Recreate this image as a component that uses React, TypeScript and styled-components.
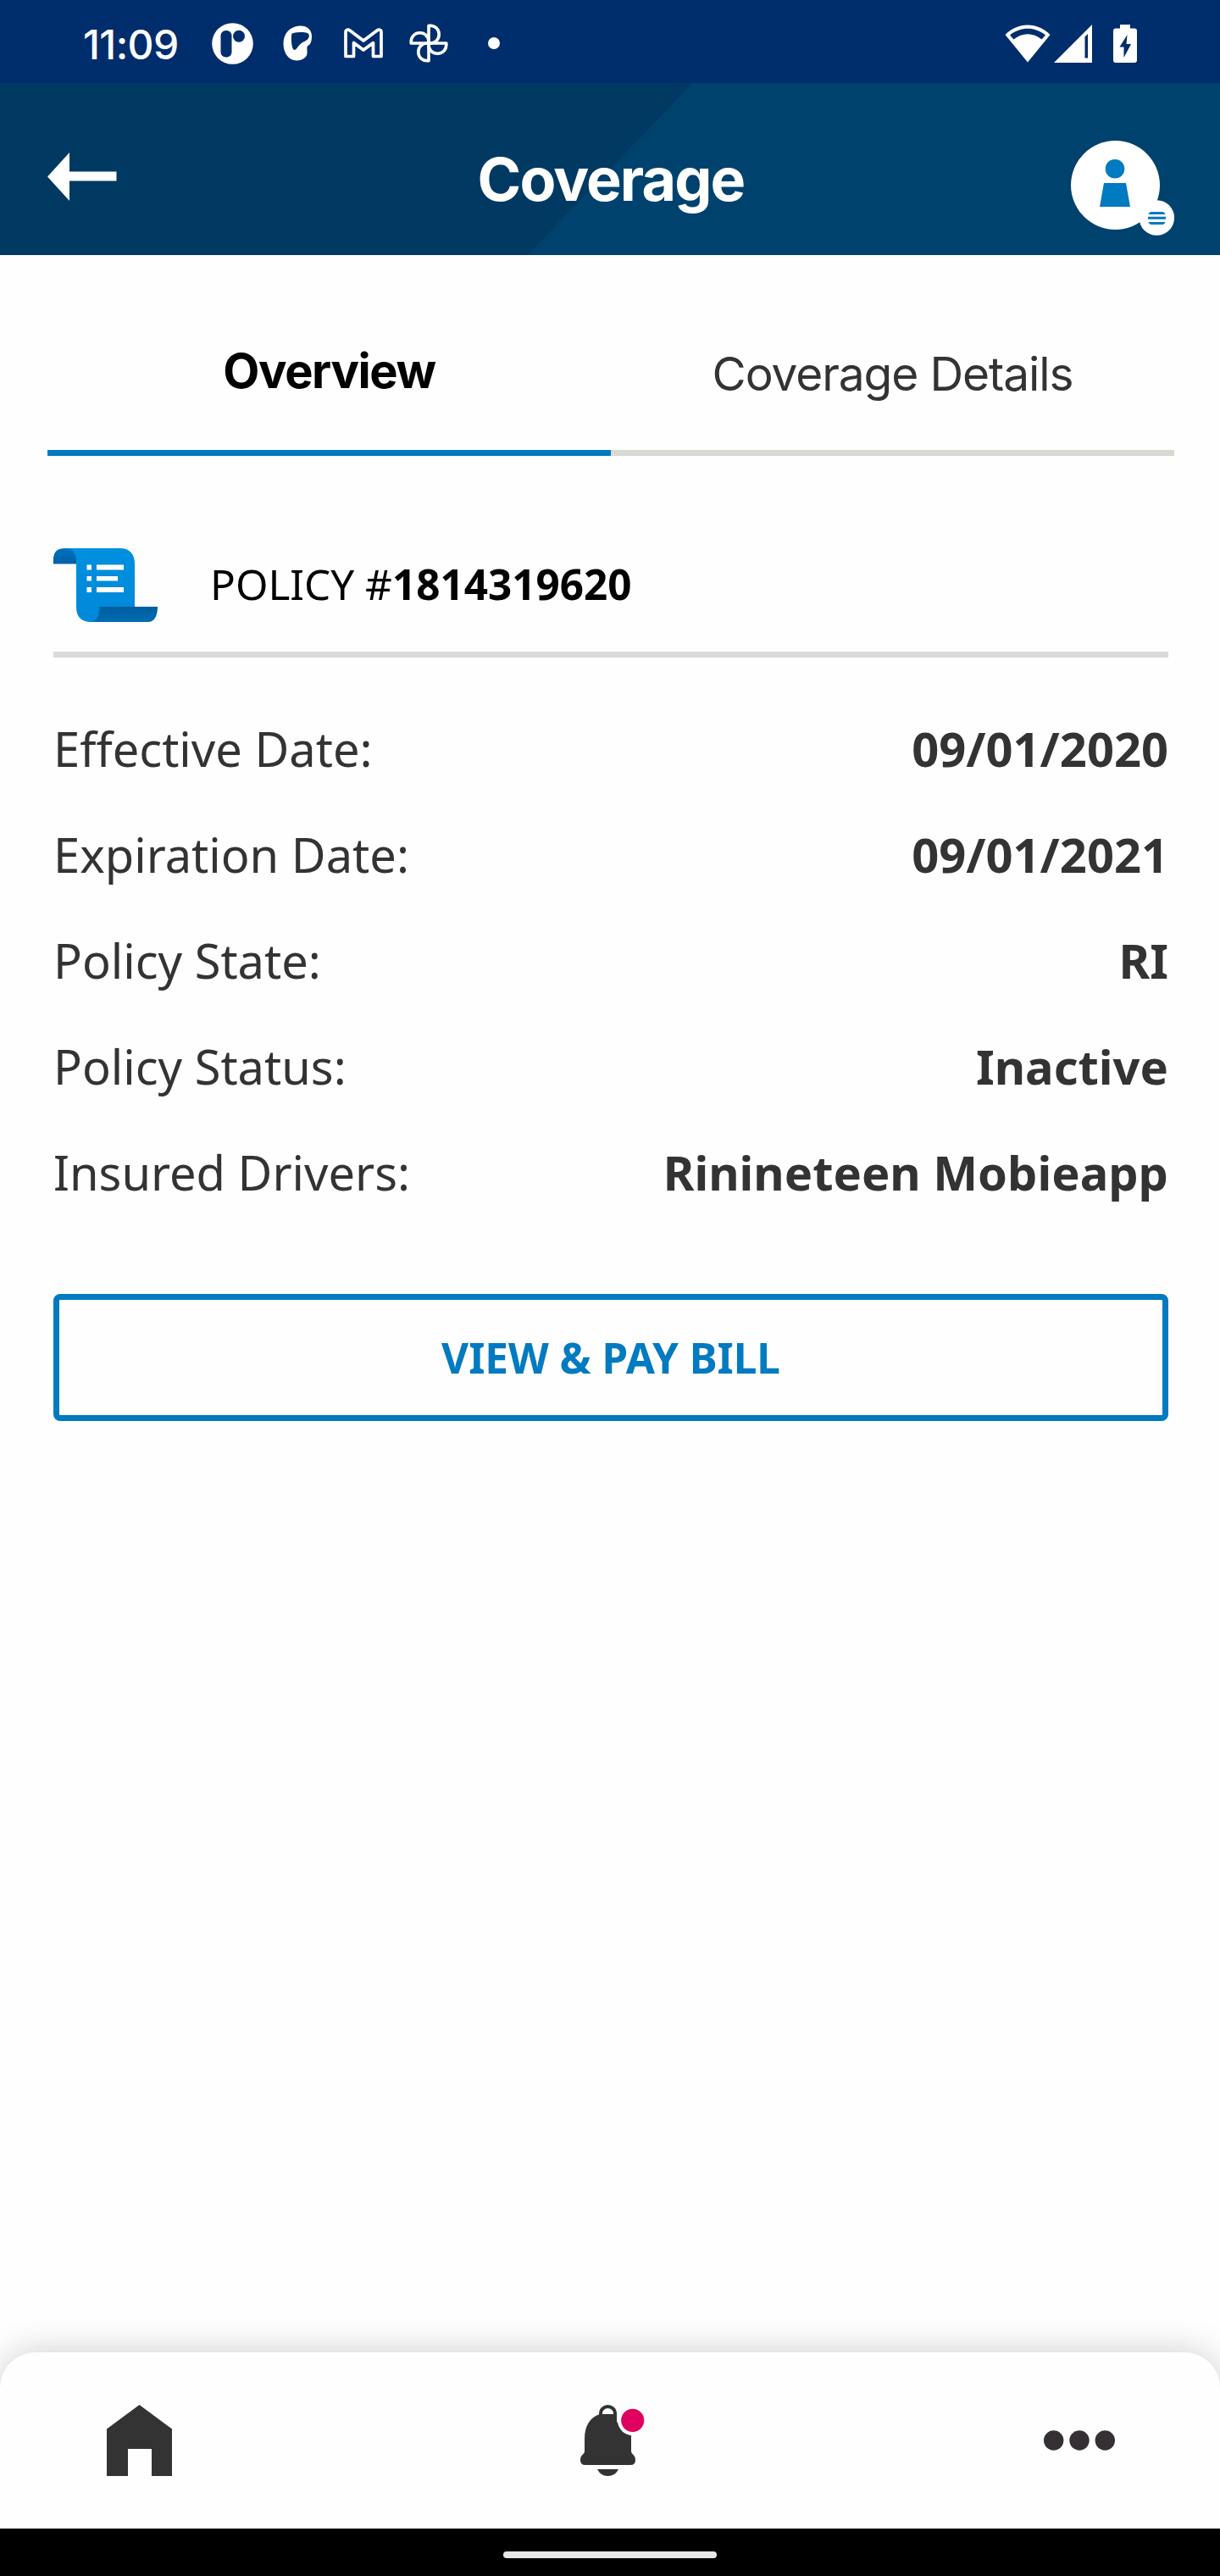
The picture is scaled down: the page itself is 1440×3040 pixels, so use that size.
import React from 'react';
import styled, { createGlobalStyle } from 'styled-components';

const colors = {
  status: '#002d6c',
  headerDark: '#003962',
  headerLight: '#00426e',
  accent: '#007ac0',
  text: '#333333',
  rule: '#dadada',
  tabRule: '#d9d9d1',
};

const GlobalStyle = createGlobalStyle`
  *, *::before, *::after { box-sizing: border-box; }
  body {
    margin: 0;
    background: #fefefe;
    color: ${colors.text};
    font-family: "Noto Sans", sans-serif;
  }
  svg { display: block; flex: none; }
  button { font: inherit; color: inherit; margin: 0; padding: 0; border: 0; background: none; }
`;

const Screen = styled.div`
  display: flex;
  flex-direction: column;
  width: 1440px;
  height: 3040px;
  overflow: hidden;
`;

/* ---------- status bar ---------- */

const StatusBar = styled.div`
  display: flex;
  align-items: center;
  justify-content: space-between;
  height: 98px;
  flex: none;
  padding: 4px 98px 0 98px;
  background: ${colors.status};
  color: #fff;
`;

const StatusGroup = styled.div`
  display: flex;
  align-items: center;
`;

const StatusSlot = styled.span<{ $width: number; $align?: string }>`
  display: flex;
  flex: none;
  justify-content: ${({ $align }) => $align ?? 'center'};
  width: ${({ $width }) => $width}px;
`;

const Clock = styled.span`
  width: 138px;
  margin-top: 3px;
  font: 500 48px/60px Inter, sans-serif;
  letter-spacing: -0.6px;
  white-space: nowrap;
`;

/* ---------- header ---------- */

const Header = styled.header`
  display: grid;
  grid-template-columns: 1fr auto 1fr;
  align-items: start;
  height: 203px;
  flex: none;
  padding: 0 54px 0 56px;
  background: linear-gradient(133.85deg, ${colors.headerDark} 49.97%, ${colors.headerLight} 50.03%);
`;

const BackButton = styled.button`
  justify-self: start;
  margin-top: 82px;
`;

const Title = styled.h1`
  margin: 69px 0 0;
  color: #fff;
  font: 700 70px/90px Inter, sans-serif;
  letter-spacing: -1.9px;
`;

const ProfileButton = styled.button`
  justify-self: end;
  margin-top: 68px;
`;

/* ---------- tabs ---------- */

const Tabs = styled.nav`
  display: grid;
  grid-template-columns: 665px 665px;
  flex: none;
  padding: 0 54px 0 56px;
`;

const Tab = styled.button<{ $active?: boolean }>`
  display: flex;
  justify-content: center;
  align-items: flex-start;
  height: 237px;
  padding-top: ${({ $active }) => ($active ? 97 : 100)}px;
  border-bottom: 7px solid ${({ $active }) => ($active ? colors.accent : colors.tabRule)};
  color: ${({ $active }) => ($active ? '#000' : colors.text)};
  font: ${({ $active }) => ($active ? '700 56px' : '400 55px')}/80px Inter, sans-serif;
  letter-spacing: ${({ $active }) => ($active ? -1.4 : -1.1)}px;
`;

/* ---------- policy ---------- */

const Content = styled.main`
  display: flex;
  flex-direction: column;
  flex: 1;
  padding: 74px 61px 0 63px;
`;

const PolicyHeading = styled.div`
  display: flex;
  align-items: center;
  gap: 62px;
  height: 164px;
  border-bottom: 7px solid ${colors.rule};
`;

const PolicyNumber = styled.h2`
  margin: 0 0 3px;
  color: #000;
  font-size: 49.4px;
  font-weight: 400;
  line-height: 70px;
`;

const Details = styled.dl`
  margin: 45px 0 0;
`;

const DetailRow = styled.div`
  display: flex;
  justify-content: space-between;
  height: 125px;
  font-size: 56px;
  line-height: 125px;
`;

const DetailLabel = styled.dt``;

const DetailValue = styled.dd`
  margin: 0;
  font-weight: 700;
`;

const BillButton = styled.button`
  height: 150px;
  margin-top: 81px;
  border: 7px solid ${colors.accent};
  border-radius: 8px;
  color: ${colors.accent};
  font-size: 49.4px;
  font-weight: 700;
  line-height: 134px;
`;

/* ---------- bottom navigation ---------- */

const BottomNav = styled.nav`
  display: flex;
  justify-content: space-between;
  align-items: flex-start;
  height: 208px;
  flex: none;
  padding: 62px 124px 0 126px;
  border-radius: 42px 42px 0 0;
  background: #fefefe;
  box-shadow: 0 -2px 40px rgba(0, 0, 0, 0.18);
`;

const SystemBar = styled.div`
  display: flex;
  justify-content: center;
  align-items: flex-start;
  height: 56px;
  flex: none;
  padding-top: 27px;
  background: #000;
  z-index: 1;
`;

const HomeHandle = styled.div`
  width: 252px;
  height: 8px;
  border-radius: 4px;
  background: #e6e6e6;
`;

/* ---------- icons ---------- */

const AppBadgeIcon = () => (
  <svg width="49" height="49" viewBox="0 0 49 49">
    <circle cx="24.5" cy="24.5" r="24.3" fill="#fff" />
    <rect x="10.5" y="9" width="13" height="31.5" rx="6" fill={colors.status} />
    <circle cx="32" cy="15.7" r="7" fill={colors.status} />
  </svg>
);

const PatreonIcon = () => (
  <svg width="35" height="42" viewBox="0 0 35 42">
    <path
      d="M20 0.5C28 0 34 5 34 12.5C34 18 33 22 29.5 24C27.5 25 29 29 28.5 33C28 38.500 22 41.500 16 41.500C7 41.500 0.500 33 0.500 21.500C0.500 9.500 8 1.200 20 0.500Z"
      fill="#fff"
    />
    <path
      d="M12 9C17 7.800 23 8 27 8.500C30.500 9 31.500 11.500 30.500 14C29 18.500 24 18.500 20 22.500C17 25.500 15.500 29 13.500 29C11 29 9.500 20 10 13C10 10.500 10.500 9.400 12 9Z"
      fill={colors.status}
    />
  </svg>
);

const GmailIcon = () => (
  <svg width="46" height="36" viewBox="0 0 46 36" fill="none" stroke="#fff" strokeWidth="3.7" strokeLinejoin="round">
    <path d="M2 33.500V5C2 2 5 1.500 7 3L23 15L39 3C41 1.500 44 2 44 5V33.500H34.500V17.500L23 26L11.500 17.500V33.500Z" />
  </svg>
);

const PinwheelIcon = () => (
  <svg width="46" height="46" viewBox="0 0 46 46" fill="none" stroke="#fff" strokeWidth="3.6" strokeLinejoin="round">
    {[0, 90, 180, 270].map((angle) => (
      <path key={angle} d="M23 23V2.200H24.500C31 2.200 35.200 6.800 35.200 12.500C35.200 18.500 31 23 24.500 23Z" transform={`rotate(${angle} 23 23)`} />
    ))}
  </svg>
);

const DotIcon = () => (
  <svg width="14" height="14" viewBox="0 0 14 14">
    <circle cx="7" cy="7" r="7" fill="#fff" />
  </svg>
);

const WifiIcon = () => (
  <svg width="54" height="45" viewBox="0 0 54 45">
    <path d="M27 44.500L0.500 12C8 4.500 17 0.500 27 0.500S46 4.500 53.500 12Z" fill="#fff" />
    <path d="M6 12.500C19 2.300 35 2.300 48 12.500L43.500 17.500C33 9.300 21 9.300 10.500 17.500Z" fill={colors.status} />
  </svg>
);

const SignalIcon = () => (
  <svg width="45" height="45" viewBox="0 0 45 45">
    <path d="M0 45L45 0V45Z" fill="#fff" />
    <path d="M36.500 14.500L40 11V39.500H36.500Z" fill={colors.status} />
  </svg>
);

const BatteryIcon = () => (
  <svg width="28" height="45" viewBox="0 0 28 45">
    <path d="M8 0H20V4.500H25Q28 4.500 28 7.500V42Q28 45 25 45H3Q0 45 0 42V7.500Q0 4.500 3 4.500H8Z" fill="#fff" />
    <path d="M16.500 12L7.500 26.500H12.500V39L21 23H15.500Z" fill={colors.status} />
  </svg>
);

const BackArrowIcon = () => (
  <svg width="82" height="58" viewBox="0 0 82 58" fill="#fff">
    <path d="M0 28.500L26 0V22.500H81.500V33.500H26V57Z" />
  </svg>
);

const ProfileIcon = () => (
  <svg width="122" height="112" viewBox="0 0 122 112">
    <circle cx="52.500" cy="52.500" r="52.500" fill="#fff" />
    <circle cx="52" cy="33.300" r="11.300" fill={colors.accent} />
    <path d="M39 50H65L70 78H34Z" fill={colors.accent} />
    <circle cx="101.300" cy="91" r="20.800" fill="#fff" />
    <path
      d="M91.500 87Q92.500 84 95 84H108Q110.500 84 111.500 87ZM91 89.800H112V92.800H91ZM91.500 96H111.500Q110.500 99 108 99H95Q92.500 99 91.500 96Z"
      fill={colors.accent}
    />
  </svg>
);

const PolicyIcon = () => (
  <svg width="123" height="87" viewBox="0 0 123 87">
    <defs>
      <linearGradient id="curlTop" x1="0" y1="0" x2="0" y2="1">
        <stop offset="0" stopColor="#0073bd" />
        <stop offset="1" stopColor="#005fa6" />
      </linearGradient>
      <linearGradient id="sheet" x1="0" y1="0" x2="0" y2="1">
        <stop offset="0" stopColor="#0090df" />
        <stop offset="1" stopColor="#0088da" />
      </linearGradient>
      <linearGradient id="curlBottom" x1="0" y1="0" x2="0" y2="1">
        <stop offset="0" stopColor="#005c9f" />
        <stop offset="1" stopColor="#006db4" />
      </linearGradient>
    </defs>
    <path d="M0 18.500V13Q0 0 14 0H30V18.500Z" fill="url(#curlTop)" />
    <path d="M14 0H80Q96 1 96 19V70L58 87H43Q27 86 27 69V15Q27 1 14 0Z" fill="url(#sheet)" />
    <path d="M43 87C51 86 54.500 80 54.500 69H123C123 80 119 87 112 87Z" fill="url(#curlBottom)" />
    <path
      d="M39.500 19.500H45V25.500H39.500ZM51 19.500H83V25.500H51ZM39.500 33H45V38.500H39.500ZM51 33H76V38.500H51ZM39.500 46H45V52H39.500ZM51 46H83V52H51Z"
      fill="#fff"
    />
  </svg>
);

const HomeIcon = () => (
  <svg width="77" height="84" viewBox="0 0 77 84" fill={colors.text}>
    <path d="M38.500 0L77 28.500V84H53V52H25V84H0V28.500Z" />
  </svg>
);

const BellIcon = () => (
  <svg width="65" height="84" viewBox="0 0 65 84" overflow="visible">
    <path d="M5 55V40C5 25 11 15 23 11H43V20L60 36V55C60 58 65 59 65 65Q65 71 59 71H6Q0 71 0 65C0 59 5 58 5 55Z" fill={colors.text} />
    <path d="M24 13V10.500C24 -0.700 41 -0.700 41 10.500V13" fill="none" stroke={colors.text} strokeWidth="4" />
    <path d="M26 9Q32.500 1.500 39 9Z" fill="#fefefe" />
    <path d="M20 76H45Q41 84 32.500 84T20 76Z" fill={colors.text} />
    <circle cx="61.700" cy="18.300" r="17.800" fill="#fefefe" />
    <circle cx="61.700" cy="18.300" r="13.600" fill="#e0005f" />
  </svg>
);

const MoreIcon = () => (
  <svg width="84" height="84" viewBox="0 0 84 84" fill="#343034">
    <circle cx="11.700" cy="42" r="11.700" />
    <circle cx="42" cy="42" r="11.700" />
    <circle cx="72.300" cy="42" r="11.700" />
  </svg>
);

/* ---------- page ---------- */

const notifications = [AppBadgeIcon, PatreonIcon, GmailIcon, PinwheelIcon, DotIcon];

const details = [
  ['Effective Date:', '09/01/2020'],
  ['Expiration Date:', '09/01/2021'],
  ['Policy State:', 'RI'],
  ['Policy Status:', 'Inactive'],
  ['Insured Drivers:', 'Rinineteen Mobieapp'],
];

export default function App() {
  return (
    <>
      <GlobalStyle />
      <Screen>
        <StatusBar>
          <StatusGroup>
            <Clock>11:09</Clock>
            {notifications.map((Icon, index) => (
              <StatusSlot key={index} $width={77}>
                <Icon />
              </StatusSlot>
            ))}
          </StatusGroup>
          <StatusGroup>
            <WifiIcon />
            <StatusSlot $width={49} $align="flex-end">
              <SignalIcon />
            </StatusSlot>
            <StatusSlot $width={53} $align="flex-end">
              <BatteryIcon />
            </StatusSlot>
          </StatusGroup>
        </StatusBar>
        <Header>
          <BackButton aria-label="Back">
            <BackArrowIcon />
          </BackButton>
          <Title>Coverage</Title>
          <ProfileButton aria-label="Profile menu">
            <ProfileIcon />
          </ProfileButton>
        </Header>
        <Tabs>
          <Tab $active>Overview</Tab>
          <Tab>Coverage Details</Tab>
        </Tabs>
        <Content>
          <PolicyHeading>
            <PolicyIcon />
            <PolicyNumber>
              POLICY #<b>1814319620</b>
            </PolicyNumber>
          </PolicyHeading>
          <Details>
            {details.map(([label, value]) => (
              <DetailRow key={label}>
                <DetailLabel>{label}</DetailLabel>
                <DetailValue>{value}</DetailValue>
              </DetailRow>
            ))}
          </Details>
          <BillButton>VIEW &amp; PAY BILL</BillButton>
        </Content>
        <BottomNav>
          <HomeIcon />
          <BellIcon />
          <MoreIcon />
        </BottomNav>
        <SystemBar>
          <HomeHandle />
        </SystemBar>
      </Screen>
    </>
  );
}
